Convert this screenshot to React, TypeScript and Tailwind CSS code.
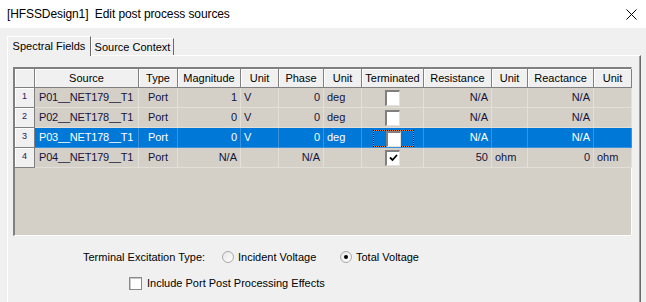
const COLS =
  "grid grid-cols-[20px_104px_39px_63px_38px_45px_38px_62px_68px_36px_66px_38px]";

const HEADERS = [
  "",
  "Source",
  "Type",
  "Magnitude",
  "Unit",
  "Phase",
  "Unit",
  "Terminated",
  "Resistance",
  "Unit",
  "Reactance",
  "Unit",
];

type Row = {
  source: string;
  mag: string;
  magUnit: string;
  phase: string;
  phaseUnit: string;
  checked: boolean;
  res: string;
  resUnit: string;
  react: string;
  reactUnit: string;
};

const ROWS: Row[] = [
  { source: "P01__NET179__T1", mag: "1", magUnit: "V", phase: "0", phaseUnit: "deg", checked: false, res: "N/A", resUnit: "", react: "N/A", reactUnit: "" },
  { source: "P02__NET178__T1", mag: "0", magUnit: "V", phase: "0", phaseUnit: "deg", checked: false, res: "N/A", resUnit: "", react: "N/A", reactUnit: "" },
  { source: "P03__NET178__T1", mag: "0", magUnit: "V", phase: "0", phaseUnit: "deg", checked: false, res: "N/A", resUnit: "", react: "N/A", reactUnit: "" },
  { source: "P04__NET179__T1", mag: "N/A", magUnit: "", phase: "N/A", phaseUnit: "", checked: true, res: "50", resUnit: "ohm", react: "0", reactUnit: "ohm" },
];

function GridCheck({ checked }: { checked: boolean }) {
  return (
    <div className="w-[15px] h-[16px] bg-white border-t-2 border-l-2 border-t-[#808080] border-l-[#808080] border-b border-r border-b-[#e4e2dc] border-r-[#e4e2dc] flex items-center justify-center">
      {checked && (
        <svg width="9" height="8" viewBox="0 0 9 8">
          <polyline points="1,3.5 3.5,6 8,1" fill="none" stroke="#000" strokeWidth="1.8" />
        </svg>
      )}
    </div>
  );
}

function Cell({
  children,
  align = "left",
  selected,
}: {
  children?: React.ReactNode;
  align?: "left" | "right" | "center";
  selected: boolean;
}) {
  const a =
    align === "right"
      ? "justify-end pr-[3px]"
      : align === "center"
        ? "justify-center"
        : "justify-start pl-[3px]";
  return (
    <div
      className={`h-[20px] flex items-center border-r border-b whitespace-nowrap overflow-hidden ${a} ${
        selected
          ? "bg-[#0078d7] text-white border-[#3c93dd]"
          : "bg-[#d4d0c8] text-[#14143c] border-[#e2dfd9]"
      }`}
    >
      {children}
    </div>
  );
}

function Radio({ on }: { on: boolean }) {
  return (
    <span className="w-[12px] h-[12px] rounded-full border border-[#a8a8a8] bg-gradient-to-br from-[#e6e6e6] to-white flex items-center justify-center shrink-0">
      {on && <span className="w-[4px] h-[4px] rounded-full bg-black" />}
    </span>
  );
}

export default function App() {
  return (
    <div className="w-[646px] h-[302px] overflow-hidden flex flex-col bg-[#f0f0f0] font-['Liberation_Sans',Arial,sans-serif] text-[11px] text-black">
      {/* title bar */}
      <div className="h-[28px] bg-white flex items-center justify-between pl-[7px] pr-[9px] shrink-0">
        <span className="text-[12px] tracking-[-0.1px]">[HFSSDesign1]&nbsp; Edit post process sources</span>
        <svg width="11" height="11" viewBox="0 0 11 11">
          <path d="M0.5 0.5 L10.5 10.5 M10.5 0.5 L0.5 10.5" stroke="#000" strokeWidth="1" />
        </svg>
      </div>

      {/* body */}
      <div className="flex-1 flex flex-col pl-[7px] pr-[5px] pt-[8px]">
        {/* tabs */}
        <div className="flex items-end h-[19px] shrink-0">
          <div className="relative z-10 -mb-[1px] w-[84px] h-[20px] bg-[#f0f0f0] border-l border-t border-white border-r border-r-[#696969] flex items-center justify-center pb-[1px]">
            Spectral Fields
          </div>
          <div className="w-[83px] h-[17px] bg-[#f0f0f0] border-l border-t border-white border-r border-r-[#696969] flex items-center justify-center">
            Source Context
          </div>
        </div>

        {/* panel */}
        <div className="flex-1 border-l border-t border-white border-r border-r-[#696969] shadow-[inset_-1px_0_0_#a0a0a0] pl-[5px] pt-[11px]">
          {/* grid */}
          <div className="w-[619px] h-[169px] bg-[#d4d0c8] border-t-2 border-l-2 border-[#808080] border-r border-b border-r-white border-b-white">
            <div className={COLS}>
              {HEADERS.map((h, i) => (
                <div
                  key={i}
                  className="h-[19px] bg-[#f0f0f0] border-r border-b border-[#808080] shadow-[inset_1px_1px_0_#fff] flex items-center justify-center whitespace-nowrap"
                >
                  {h}
                </div>
              ))}
            </div>
            {ROWS.map((r, i) => {
              const sel = i === 2;
              return (
                <div key={i} className={COLS}>
                  <div className="h-[20px] bg-[#f0f0f0] border-r border-b border-[#808080] shadow-[inset_1px_1px_0_#fff] flex justify-center pt-[4px] text-[9px] leading-[9px] text-[#1a1a60]">
                    {i + 1}
                  </div>
                  <Cell selected={sel}>
                    <span className="pl-[1px] tracking-[-0.2px]">{r.source}</span>
                  </Cell>
                  <Cell selected={sel} align="center">Port</Cell>
                  <Cell selected={sel} align="right">{r.mag}</Cell>
                  <Cell selected={sel}>{r.magUnit}</Cell>
                  <Cell selected={sel} align="right">{r.phase}</Cell>
                  <Cell selected={sel}>{r.phaseUnit}</Cell>
                  <Cell selected={sel} align="center">
                    {sel ? (
                      <div className="w-[41px] h-[17px] mt-[2px] border border-dotted border-black bg-[#f08a00] ml-[1px]">
                        <div className="w-full h-full bg-[#0078d7] flex items-center justify-center">
                          <GridCheck checked={r.checked} />
                        </div>
                      </div>
                    ) : (
                      <GridCheck checked={r.checked} />
                    )}
                  </Cell>
                  <Cell selected={sel} align="right">{r.res}</Cell>
                  <Cell selected={sel}>{r.resUnit}</Cell>
                  <Cell selected={sel} align="right">{r.react}</Cell>
                  <Cell selected={sel}>{r.reactUnit}</Cell>
                </div>
              );
            })}
          </div>

          {/* excitation type */}
          <div className="mt-[13px] h-[16px] flex items-center pl-[70px]">
            <span className="w-[139px] whitespace-nowrap">Terminal Excitation Type:</span>
            <div className="w-[118px] flex items-center gap-[4px]">
              <Radio on={false} />
              <span className="whitespace-nowrap">Incident Voltage</span>
            </div>
            <div className="flex items-center gap-[4px]">
              <Radio on={true} />
              <span className="whitespace-nowrap">Total Voltage</span>
            </div>
          </div>

          {/* include checkbox */}
          <div className="mt-[10px] h-[16px] flex items-center pl-[116px]">
            <span className="w-[13px] h-[13px] bg-white border border-[#8a8a8a] shadow-[inset_1px_1px_0_#c8c8c8] shrink-0" />
            <span className="ml-[5px] whitespace-nowrap">Include Port Post Processing Effects</span>
          </div>
        </div>
      </div>
    </div>
  );
}
